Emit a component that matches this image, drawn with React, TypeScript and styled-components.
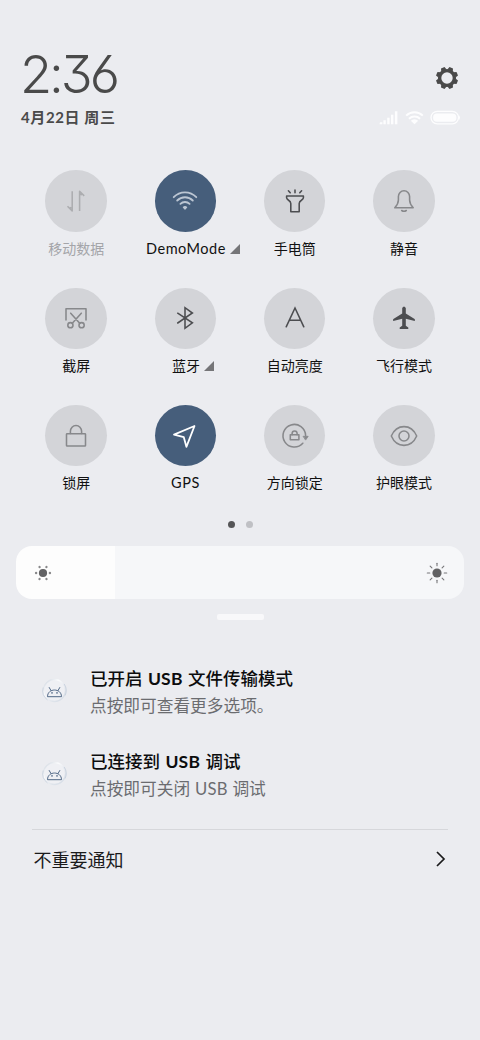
import React from 'react';
import styled, { createGlobalStyle } from 'styled-components';

const Global = createGlobalStyle`
  * { box-sizing: border-box; }
  body {
    margin: 0;
    background: #ebecf0;
    font-family: Lato, "Noto Sans CJK SC", sans-serif;
    color: #111;
  }
`;

const Screen = styled.main`
  width: 480px;
  height: 1040px;
  background: #ebecf0;
  overflow: hidden;
`;

const Header = styled.header`
  display: flex;
  justify-content: space-between;
  padding: 47px 19px 0 20px;
  height: 170px;
`;

const Clock = styled.div`
  font-family: Inter, sans-serif;
  font-feature-settings: "cv09", "cv03";
  font-weight: 300;
  font-size: 52.5px;
  line-height: 54px;
  letter-spacing: -3.1px;
  color: #4a4a4a;
`;

const DateLine = styled.div`
  margin: 5px 0 0 1px;
  font-size: 15px;
  letter-spacing: 0.6px;
  line-height: 22px;
  font-weight: 700;
  color: #4a4a4a;
  white-space: nowrap;
`;

const HeaderSide = styled.div`
  display: flex;
  flex-direction: column;
  align-items: flex-end;
  padding-top: 19px;
`;

const GearSlot = styled.div`
  display: flex;
  height: 44px;
  padding-right: 2px;
`;

const StatusIcons = styled.div`
  display: flex;
  height: 16px;
`;

const Tiles = styled.section`
  display: grid;
  grid-template-columns: repeat(4, 109.3px);
  grid-auto-rows: 117.3px;
  padding-top: 0.3px;
  margin-left: 21.5px;
`;

const Tile = styled.div`
  display: flex;
  flex-direction: column;
  align-items: center;
`;

const Disc = styled.div<{ $active?: boolean; $color: string }>`
  display: flex;
  align-items: center;
  justify-content: center;
  width: 61.4px;
  height: 61.4px;
  border-radius: 50%;
  background: ${p => (p.$active ? '#465e7b' : '#d3d4d8')};
  color: ${p => p.$color};
`;

const Caption = styled.div<{ $muted?: boolean; $shift?: number; $wide?: boolean }>`
  display: flex;
  align-items: center;
  gap: 4px;
  margin-top: 7px;
  margin-left: ${p => p.$shift || 0}px;
  font-size: ${p => (p.$wide ? 14.5 : 14)}px;
  letter-spacing: ${p => (p.$wide ? 0.5 : 0)}px;
  line-height: 20px;
  white-space: nowrap;
  color: ${p => (p.$muted ? '#a4a5a9' : '#111')};
`;

const Dots = styled.div`
  display: flex;
  justify-content: center;
  gap: 11px;
  height: 24.8px;
  margin-top: -0.9px;
`;

const Dot = styled.i<{ $on?: boolean }>`
  width: 7px;
  height: 7px;
  border-radius: 50%;
  background: ${p => (p.$on ? '#555557' : '#bfc0c4')};
`;

const Slider = styled.div`
  display: flex;
  align-items: center;
  justify-content: space-between;
  margin: 0 16px;
  height: 53px;
  padding: 0 15px;
  border-radius: 16px;
  background: linear-gradient(90deg, #fdfdfd 99px, #f6f7f9 99px);
`;

const Handle = styled.div`
  width: 47px;
  height: 6px;
  margin: 15px auto 0;
  border-radius: 2px;
  background: #f8f8fa;
`;

const Notices = styled.section`
  padding: 45px 32px 0;
`;

const Notice = styled.article`
  display: flex;
  height: 83px;
  padding-left: 10px;
`;

const NoticeIcon = styled.div`
  width: 48px;
  padding-top: 13px;
`;

const NoticeTitle = styled.div`
  font-size: 17.5px;
  line-height: 27px;
  font-weight: 500;
  color: #0c0c0d;
  white-space: nowrap;
`;

const NoticeBody = styled.div`
  margin-top: 1px;
  font-size: 16.7px;
  line-height: 27px;
  color: #6b6c70;
  white-space: nowrap;
`;

const Latin = styled.span<{ $bold?: boolean }>`
  font-weight: ${p => (p.$bold ? 700 : 400)};
  letter-spacing: 0.2px;
  margin: 0 ${p => (p.$bold ? 1 : 0.5)}px;
`;

const More = styled.footer`
  display: flex;
  align-items: center;
  justify-content: space-between;
  margin: -2px 32px 0;
  padding: 0 2px 2px 1.5px;
  height: 60px;
  border-top: 1px solid #d6d7db;
  font-size: 18px;
  color: #1a1a1b;
`;

type IconProps = { w?: number; children: React.ReactNode };
const Icon = ({ w = 1.55, children }: IconProps) => (
  <svg width="30" height="30" viewBox="-15 -15 30 30" fill="none" stroke="currentColor"
    strokeWidth={w} strokeLinecap="round" strokeLinejoin="round">{children}</svg>
);

const grey = '#87888b';
const dark = '#4c4d50';

const tiles = [
  { label: '移动数据', color: '#acadb0', muted: true, icon: (
    <Icon><path d="M-3.8-9.8V10L-8.5 5.3M-3.8 7.2L-6.3 6.4M3.6 10V-9.8L8.2-5.1M3.6-7L6-6.3" strokeLinecap="butt" /></Icon>) },
  { label: 'DemoMode', color: '#bcc6d3', active: true, arrow: true, wide: true, shift: 15, icon: (
    <Icon w={1.8}><path d="M-11.3-3.8A15.5 15.5 0 0 1 11.3-3.8M-7.8-.5A11 11 0 0 1 7.8-.5M-4.6 2.9A6.5 6.5 0 0 1 4.6 2.9" />
      <path d="M-1.6 6.3Q0 4.9 1.6 6.3L0 8Z" fill="currentColor" strokeWidth="1.2" /></Icon>) },
  { label: '手电筒', color: dark, icon: (
    <Icon><path d="M-8.4-5H8.4V-3.2C8.4-.6 4.2-.8 4.2 2.4V10.8H-4.2V2.4C-4.2-.8-8.4-.6-8.4-3.2ZM0-8.2V-11M-4.8-8.2L-6.6-10.2M4.8-8.2L6.6-10.2" /></Icon>) },
  { label: '静音', color: grey, icon: (
    <Icon><path d="M-9.2 6.8H9.2C7 4.3 5.6 2.2 5.6-1V-4.4A5.6 5.8 0 0 0-5.6-4.4V-1C-5.6 2.2-7 4.3-9.2 6.8ZM-2.3 9.5Q0 11.1 2.3 9.5" /></Icon>) },
  { label: '截屏', color: grey, icon: (
    <Icon><path d="M-10 2V-9.2H10V2M-5.3-4.8L3.7 5.3M5.3-4.8L-3.7 5.3" /><circle cx="-5.6" cy="7.2" r="2.6" /><circle cx="5.6" cy="7.2" r="2.6" /></Icon>) },
  { label: '蓝牙', color: dark, arrow: true, shift: 15, icon: (
    <Icon><path d="M-7.3-4.8L7.4 4.8L0 10.3V-10.3L7.4-5L-7.3 5" strokeLinejoin="miter" /></Icon>) },
  { label: '自动亮度', color: dark, icon: <Icon><path d="M-8.8 8.8L0-10L8.8 8.8M-5.8 2.3H5.8" strokeLinejoin="miter" /></Icon> },
  { label: '飞行模式', color: dark, icon: (
    <Icon><path stroke="none" fill="currentColor" d="M-1.8-10Q0-13.2 1.8-10V-4.5L10.6 1Q11.2 1.6 10.8 3L1.8.8V7.7L4.3 9.5V10.9H-4.3V9.5L-1.8 7.7V.8L-10.8 3Q-11.2 1.6-10.6 1L-1.8-4.5Z" /></Icon>) },
  { label: '锁屏', color: grey, icon: (
    <Icon><rect x="-9.5" y="-2.3" width="19" height="12.3" rx=".6" /><path d="M-5.6-2.5V-4.7A5.6 5.8 0 0 1 5.6-4.7V-2.5" /></Icon>) },
  { label: 'GPS', color: '#fff', active: true, wide: true, icon: (
    <Icon w={1.8}><path d="M9.5-10L-11-1.4L-1.2 1.2L1.4 10.8Z" /></Icon>) },
  { label: '方向锁定', color: grey, icon: (
    <Icon><path d="M10.6-.4A11.3 11.3 0 1 0 7.8 7.2" /><path d="M8.4.3H13.2L10.8 3.8Z" fill="currentColor" strokeWidth=".8" />
      <rect x="-4.7" y="-1.2" width="8.6" height="5" /><path d="M-2.9-1.3V-2.5A2.5 2.6 0 0 1 2.1-2.5V-1.3" /></Icon>) },
  { label: '护眼模式', color: grey, icon: (
    <Icon><path d="M-12.7 0C-7.2-12.5 7.2-12.5 12.7 0C7.2 12.5-7.2 12.5-12.7 0Z" /><circle r="5" /></Icon>) },
];

const notices = [
  { title: ['已开启 ', 'USB', ' 文件传输模式'], body: ['点按即可查看更多选项。'] },
  { title: ['已连接到 ', 'USB', ' 调试'], body: ['点按即可关闭 ', 'USB', ' 调试'] },
];

const teeth = [22.5, 67.5, 112.5, 157.5, 202.5, 247.5, 292.5, 337.5];

const Gear = () => (
  <svg width="24" height="24" viewBox="-12 -12 24 24" fill="#4a4a4a">
    <circle r="7.4" fill="none" stroke="#4a4a4a" strokeWidth="3.4" />
    {teeth.map(a => <path key={a} transform={`rotate(${a})`} d="M-2.9-8L-1.9-11.1H1.9L2.9-8Z" />)}
  </svg>
);

const Status = () => (
  <svg width="82" height="16" viewBox="0 0 82 16" fill="#fdfdfe">
    <path d="M1 12.3H3.4V14.2H.5ZM4.4 10.3H6.8V14.2H4.4ZM8.2 7.8H10.6V14.2H8.2ZM12 4.8H14.4V14.2H12ZM15.9 1.3H18.4V14.2H15.9Z" />
    <path d="M27.2 5.6A12 12 0 0 1 43.8 5.6M30 8.7A8 8 0 0 1 41 8.7" fill="none" stroke="#fdfdfe" strokeWidth="2" />
    <path d="M31.8 10.8A5.2 5.2 0 0 1 39.2 10.8L35.5 14.3Z" />
    <rect x="52" y="1.3" width="27.5" height="12.5" rx="6.2" fill="none" stroke="#fdfdfe" strokeWidth="1.3" />
    <rect x="54.1" y="3.4" width="23.3" height="8.3" rx="3.8" />
    <path d="M80 5.2Q82 7.5 80 9.9Z" />
  </svg>
);

const DimSun = () => (
  <svg width="24" height="24" viewBox="-12 -12 24 24" fill="#88888a">
    <circle r="4.1" fill="#626264" />
    {[0, 60, 120, 180, 240, 300].map(a => <circle key={a} cx="6.9" r="1.2" transform={`rotate(${a})`} />)}
  </svg>
);

const BrightSun = () => (
  <svg width="24" height="24" viewBox="-12 -12 24 24">
    <circle r="4.6" fill="#626264" />
    {[0, 45, 90, 135, 180, 225, 270, 315].map(a => (
      <path key={a} d="M7.2 0H9.7" stroke="#77777a" strokeWidth="1.1" strokeLinecap="round" transform={`rotate(${a})`} />
    ))}
  </svg>
);

const Android = () => (
  <svg width="25" height="25" viewBox="-12.5 -12.5 25 25" fill="none">
    <defs>
      <linearGradient id="rim" x1="0" y1="0" x2="1" y2="1">
        <stop offset="0" stopColor="#c9d1dc" /><stop offset=".35" stopColor="#fafbfc" />
        <stop offset=".7" stopColor="#dfe4eb" /><stop offset="1" stopColor="#d3dbe5" />
      </linearGradient>
    </defs>
    <circle r="11" fill="#eff0f4" stroke="url(#rim)" strokeWidth="1.3" />
    <path d="M-11.3-3A11.7 11.7 0 0 0-7 9.4M9.6-6.6A11.7 11.7 0 0 1 10.6 5" stroke="#c3cdda" strokeWidth=".8" />
    <path d="M-7 5.8C-7-2.7 7-2.7 7 5.8ZM-3.6-.1L-5.3-3M3.6-.1L5.3-3" stroke="#526987" strokeWidth="1" strokeLinecap="round" strokeLinejoin="round" />
    <circle cx="-2.5" cy="2.4" r=".8" fill="#526987" /><circle cx="2.5" cy="2.4" r=".8" fill="#526987" />
  </svg>
);

export default function App() {
  return (
    <Screen>
      <Global />
      <Header>
        <div>
          <Clock>2:36</Clock>
          <DateLine>4月22日 周三</DateLine>
        </div>
        <HeaderSide>
          <GearSlot><Gear /></GearSlot>
          <StatusIcons><Status /></StatusIcons>
        </HeaderSide>
      </Header>
      <Tiles>
        {tiles.map(t => (
          <Tile key={t.label}>
            <Disc $active={t.active} $color={t.color}>{t.icon}</Disc>
            <Caption $muted={t.muted} $shift={t.shift} $wide={t.wide}>
              {t.label}
              {t.arrow && <svg width="10" height="10" viewBox="0 0 10 10"><path d="M10 0V10H0Z" fill="#757578" /></svg>}
            </Caption>
          </Tile>
        ))}
      </Tiles>
      <Dots><Dot $on /><Dot /></Dots>
      <Slider><DimSun /><BrightSun /></Slider>
      <Handle />
      <Notices>
        {notices.map(n => (
          <Notice key={n.title[0]}>
            <NoticeIcon><Android /></NoticeIcon>
            <div>
              <NoticeTitle>{n.title[0]}<Latin $bold>{n.title[1]}</Latin>{n.title[2]}</NoticeTitle>
              <NoticeBody>{n.body[0]}{n.body[1] && <Latin>{n.body[1]}</Latin>}{n.body[2]}</NoticeBody>
            </div>
          </Notice>
        ))}
      </Notices>
      <More>
        不重要通知
        <svg width="10" height="16" viewBox="0 0 10 16" fill="none" stroke="#1a1a1b" strokeWidth="1.7"><path d="M1 1L8 8L1 15" /></svg>
      </More>
    </Screen>
  );
}
